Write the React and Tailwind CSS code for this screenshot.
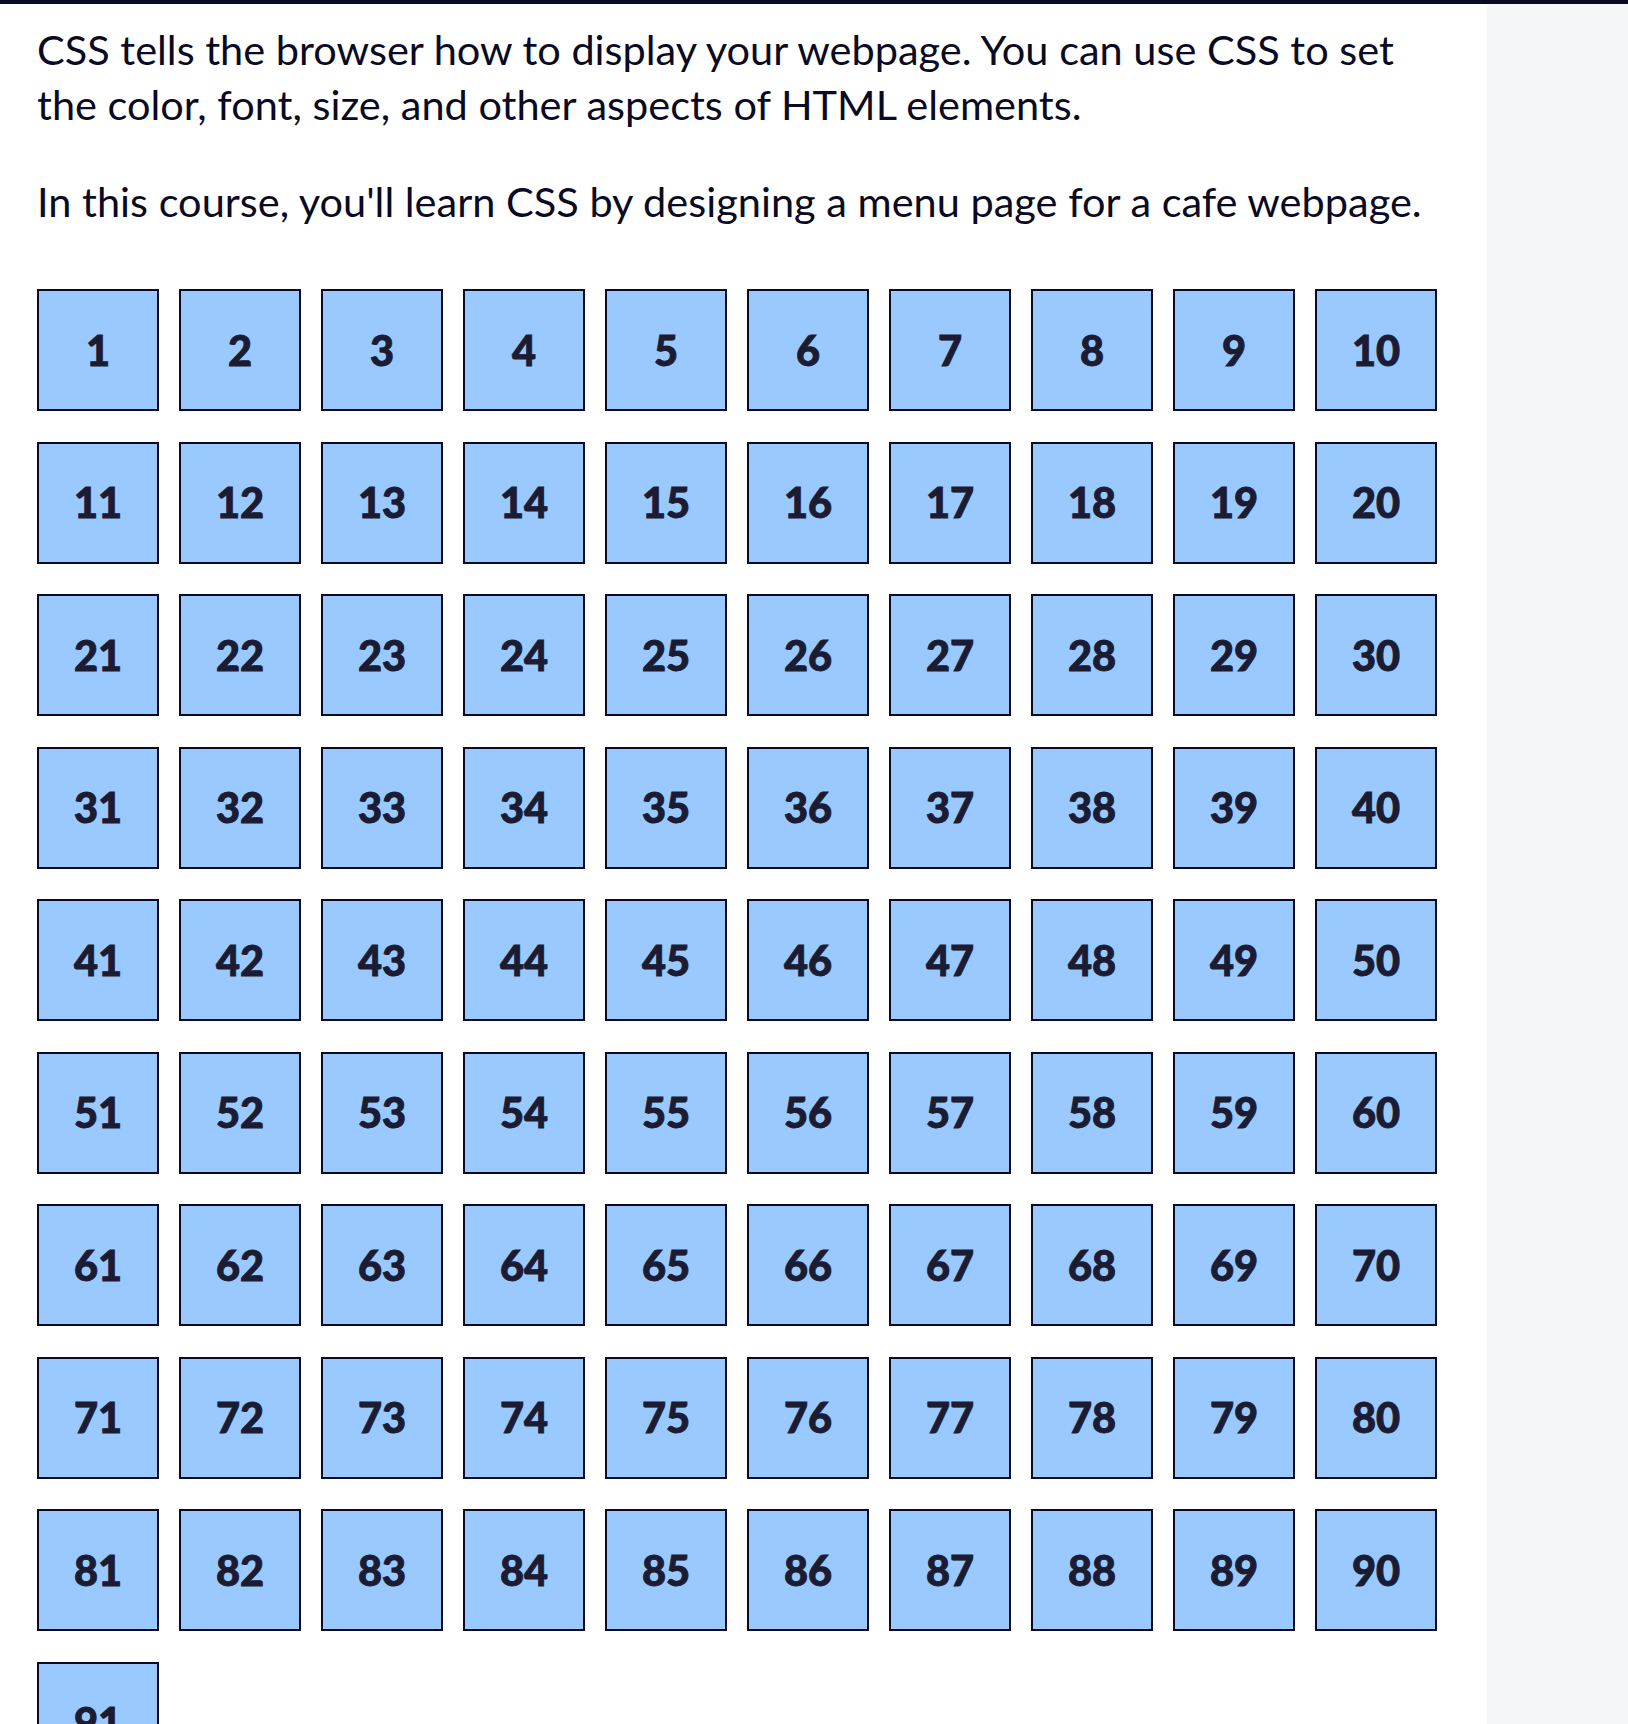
export default function App() {
  const nums = Array.from({ length: 91 }, (_, i) => i + 1);
  return (
    <div className="min-h-screen border-t-4 border-[#0a0a23] flex" style={{ fontFamily: "Lato, 'Noto Sans', sans-serif" }}>
      <div className="w-[1487px] bg-white pl-[37px] pt-[18px] text-[#0a0a23]">
        <p className="text-[41.5px] leading-[55px] mb-[42px] pr-[40px]">
          CSS tells the browser how to display your webpage. You can use CSS to set the color, font, size, and other aspects of HTML elements.
        </p>
        <p className="text-[41.5px] leading-[55px] mb-[60px]">
          In this course, you'll learn CSS by designing a menu page for a cafe webpage.
        </p>
        <div className="grid grid-cols-[repeat(10,122px)] gap-x-[20px] gap-y-[30.5px]">
          {nums.map((n) => (
            <div key={n} className="w-[122px] h-[122px] bg-[#99c9ff] border-2 border-[#0a0a23] flex items-center justify-center text-[41.5px] font-black text-[#1b1b32] [-webkit-text-stroke:0.9px_#1b1b32]">
              {n}
            </div>
          ))}
        </div>
      </div>
      <div className="flex-1 bg-[#f5f6f7]" />
    </div>
  );
}
